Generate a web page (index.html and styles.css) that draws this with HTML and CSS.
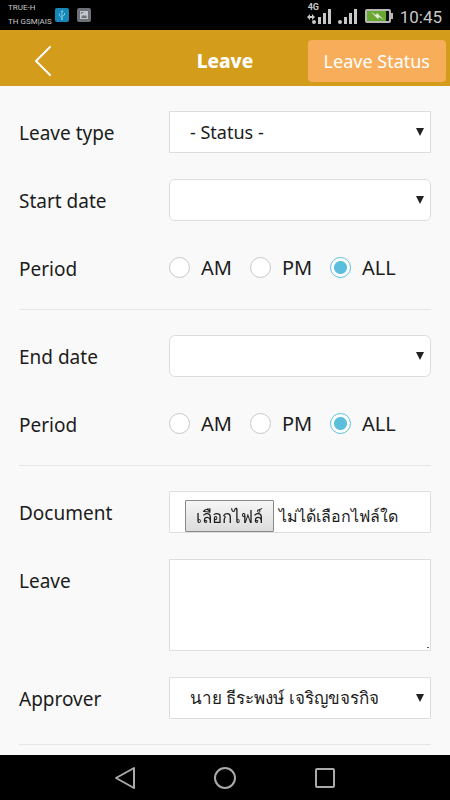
FILE: index.html
```html
<!DOCTYPE html>
<html lang="en">
<head>
<meta charset="utf-8">
<meta name="viewport" content="width=device-width, initial-scale=1">
<title>Leave</title>
<link rel="stylesheet" href="styles.css">
</head>
<body>
<div class="status">
  <div class="carriers"><span>TRUE-H</span><span>TH GSM|AIS</span></div>
  <svg class="badge" width="14" height="14" viewBox="0 0 14 14" aria-hidden="true">
    <rect width="14" height="14" rx="2" fill="#1787b8"/>
    <path d="M7 3v8M4.500 5.500v2L7 9.500M9.500 5v2L7 8.500" fill="none" stroke="#7cc8e6"/>
    <path d="M5.500 4L7 2l1.500 2z" fill="#7cc8e6"/><circle cx="7" cy="11" r="1" fill="#7cc8e6"/>
  </svg>
  <svg class="badge" width="14" height="14" viewBox="0 0 14 14" aria-hidden="true">
    <rect width="14" height="14" rx="2" fill="#6d7076"/>
    <rect x="3" y="3" width="8" height="8" fill="#c3c5ca"/>
    <path d="M4 4h3L4 6zM4 10l2-3 2 1 1-1 1 3z" fill="#6d7076"/>
  </svg>
  <div class="signals">
    <span class="network">4G</span>
    <svg width="88" height="24" viewBox="0 0 88 24" aria-hidden="true">
      <path d="M1 12l3-3v2h2v-2l3 3-3 3v-2H4v2z" fill="#c8c8c8"/>
      <g fill="#c8c8c8">
        <circle cx="8" cy="17" r="2"/><rect x="12" y="12" width="3" height="7"/><rect x="17" y="8" width="3" height="11"/><rect x="22" y="4" width="3" height="15"/>
        <circle cx="34" cy="17" r="2"/><rect x="38" y="12" width="3" height="7"/><rect x="43" y="8" width="3" height="11"/><rect x="48" y="4" width="3" height="15"/>
      </g>
      <rect x="60" y="5" width="24" height="12" rx="1" fill="#111" stroke="#b8b8b8" stroke-width="2"/>
      <rect x="61" y="6" width="19" height="10" fill="#67a82e"/>
      <rect x="85" y="8" width="2" height="6" fill="#b8b8b8"/>
      <path d="M65 7l5 3 1-2 7 7-5-3-1 2z" fill="#e4eadc"/>
    </svg>
  </div>
  <time>10:45</time>
</div>
<header class="bar">
  <a class="back" href="#" aria-label="Back"><svg width="18" height="32" viewBox="0 0 18 32"><path d="M16 2L2 16l14 14" fill="none" stroke="#fff" stroke-width="2" stroke-linecap="round" stroke-linejoin="round"/></svg></a>
  <h1>Leave</h1>
  <button class="status-button" type="button">Leave Status</button>
</header>
<main>
<form>
  <section>
    <div class="row">
      <label for="type">Leave type</label>
      <div class="pick"><select id="type"><option>- Status -</option></select></div>
    </div>
    <div class="row">
      <label for="start">Start date</label>
      <div class="pick"><select id="start" class="round"><option></option></select></div>
    </div>
    <div class="row" role="radiogroup" aria-labelledby="p1">
      <span id="p1">Period</span>
      <div class="radios">
        <label><input type="radio" name="startPeriod">AM</label>
        <label><input type="radio" name="startPeriod">PM</label>
        <label><input type="radio" name="startPeriod" checked>ALL</label>
      </div>
    </div>
  </section>
  <section>
    <div class="row">
      <label for="end">End date</label>
      <div class="pick"><select id="end" class="round"><option></option></select></div>
    </div>
    <div class="row" role="radiogroup" aria-labelledby="p2">
      <span id="p2">Period</span>
      <div class="radios">
        <label><input type="radio" name="endPeriod">AM</label>
        <label><input type="radio" name="endPeriod">PM</label>
        <label><input type="radio" name="endPeriod" checked>ALL</label>
      </div>
    </div>
  </section>
  <section class="last">
    <div class="row">
      <label for="doc">Document</label>
      <div class="file" lang="th">
        <input type="file" id="doc">
        <label class="choose" for="doc">เลือกไฟล์</label>
        <span>ไม่ได้เลือกไฟล์ใด</span>
      </div>
    </div>
    <div class="row">
      <label for="reason">Leave</label>
      <textarea id="reason"></textarea>
    </div>
    <div class="row">
      <label for="approver">Approver</label>
      <div class="pick" lang="th"><select id="approver" class="thai"><option>นาย ธีระพงษ์ เจริญขจรกิจ</option></select></div>
    </div>
  </section>
</form>
</main>
<nav class="keys">
  <button type="button" aria-label="Back"><svg width="24" height="24" viewBox="0 0 24 24"><path d="M21 2v20L3 12z"/></svg></button>
  <button type="button" aria-label="Home"><svg width="24" height="24" viewBox="0 0 24 24"><circle cx="12" cy="12" r="10"/></svg></button>
  <button type="button" aria-label="Recent apps"><svg width="24" height="24" viewBox="0 0 24 24"><rect x="3" y="3" width="18" height="18" rx="1"/></svg></button>
</nav>
</body>
</html>
```
FILE: styles.css
```css
* { box-sizing: border-box; }
body {
  margin: 0;
  min-height: 100vh;
  display: flex;
  flex-direction: column;
  background: #f9f9f9;
  color: #1c1c1c;
  font: 400 19px/44px "Noto Sans", sans-serif;
}
button, select, textarea { font: inherit; color: inherit; }
.status {
  display: flex;
  align-items: center;
  height: 30px;
  padding: 0 8px;
  background: #000;
  color: #c8c8c8;
  font-family: Roboto, sans-serif;
}
.carriers {
  display: flex;
  flex-direction: column;
  width: 47px;
  font-size: 8px;
  line-height: 14px;
  white-space: nowrap;
}
.badge { margin-right: 8px; }
.signals { position: relative; display: flex; margin-left: auto; margin-right: 6px; }
.network {
  position: absolute;
  left: 2px;
  top: 1px;
  font-size: 9px;
  font-weight: 700;
  line-height: 9px;
}
.signals svg { margin-top: 3px; }
.status time { font-size: 17px; line-height: 30px; padding-top: 4px; }
.bar {
  display: grid;
  grid-template-columns: 1fr auto 1fr;
  align-items: center;
  height: 56px;
  padding: 6px 4px 0;
  background: #d39c1b;
  color: #fff;
}
.back { display: flex; margin-left: 30px; }
.bar h1 { margin: 0; font-size: 19px; font-weight: 800; line-height: 42px; }
.status-button {
  justify-self: end;
  height: 42px;
  padding: 0 16px;
  border: 0;
  border-radius: 4px;
  background: #f8ad5b;
  font-size: 18px;
  line-height: 40px;
  white-space: nowrap;
}
main { flex: 1; padding: 0 19px; }
section {
  display: grid;
  gap: 26px;
  padding: 25px 0 20px;
  border-bottom: 1px solid #e6e6e6;
}
.last { padding-bottom: 25px; }
.row {
  display: grid;
  grid-template-columns: 150px 1fr;
  grid-auto-rows: minmax(42px, auto);
  align-items: start;
}
.row > label, .row > span { margin-bottom: -2px; }
.pick { position: relative; display: flex; }
.pick::after {
  content: "";
  position: absolute;
  right: 7px;
  top: 17px;
  border: 4px solid transparent;
  border-top: 8px solid #222;
  border-bottom: 0;
  pointer-events: none;
}
select, textarea, .file {
  width: 100%;
  height: 42px;
  border: 1px solid #ddd;
  border-radius: 1px;
  background: #fff;
}
select {
  appearance: none;
  padding: 0 20px;
  font-size: 18px;
  line-height: 40px;
}
.thai { font-size: 17px; font-weight: 300; }
.round { border-radius: 6px; }
textarea { display: block; height: 92px; padding: 8px 20px; line-height: 24px; }
textarea::-webkit-resizer { background: linear-gradient(#555, #555) 12px 12px / 2px 1px no-repeat; }
.radios { display: grid; grid-template-columns: 81px 80px auto; justify-content: start; font-size: 20px; }
.radios label { display: flex; align-items: center; gap: 11px; height: 42px; }
.radios input {
  appearance: none;
  width: 21px;
  height: 21px;
  margin: 0 0 2px;
  border: 1px solid #c8c8c8;
  border-radius: 50%;
  background: #fff;
}
.radios input:checked {
  border-color: #5bbfdb;
  background: radial-gradient(circle, #5bbfdb 6px, #fff 7px);
}
.file {
  position: relative;
  display: flex;
  align-items: end;
  gap: 5px;
  padding-left: 15px;
  font-size: 16px;
  font-weight: 300;
  line-height: 32px;
  white-space: nowrap;
}
.file input { position: absolute; inset: 0; width: 100%; opacity: 0; }
.choose {
  position: relative;
  height: 32px;
  padding: 0 10px;
  border: 1px solid #888;
  border-radius: 1px;
  background: linear-gradient(#f6f6f6, #dcdcdc);
  font-size: 17px;
}
.keys {
  display: flex;
  justify-content: center;
  align-items: center;
  gap: 76px;
  height: 45px;
  background: #000;
}
.keys button { display: flex; padding: 0; border: 0; background: none; }
.keys svg { fill: none; stroke: #aaa; stroke-width: 2; stroke-linejoin: round; }
```
